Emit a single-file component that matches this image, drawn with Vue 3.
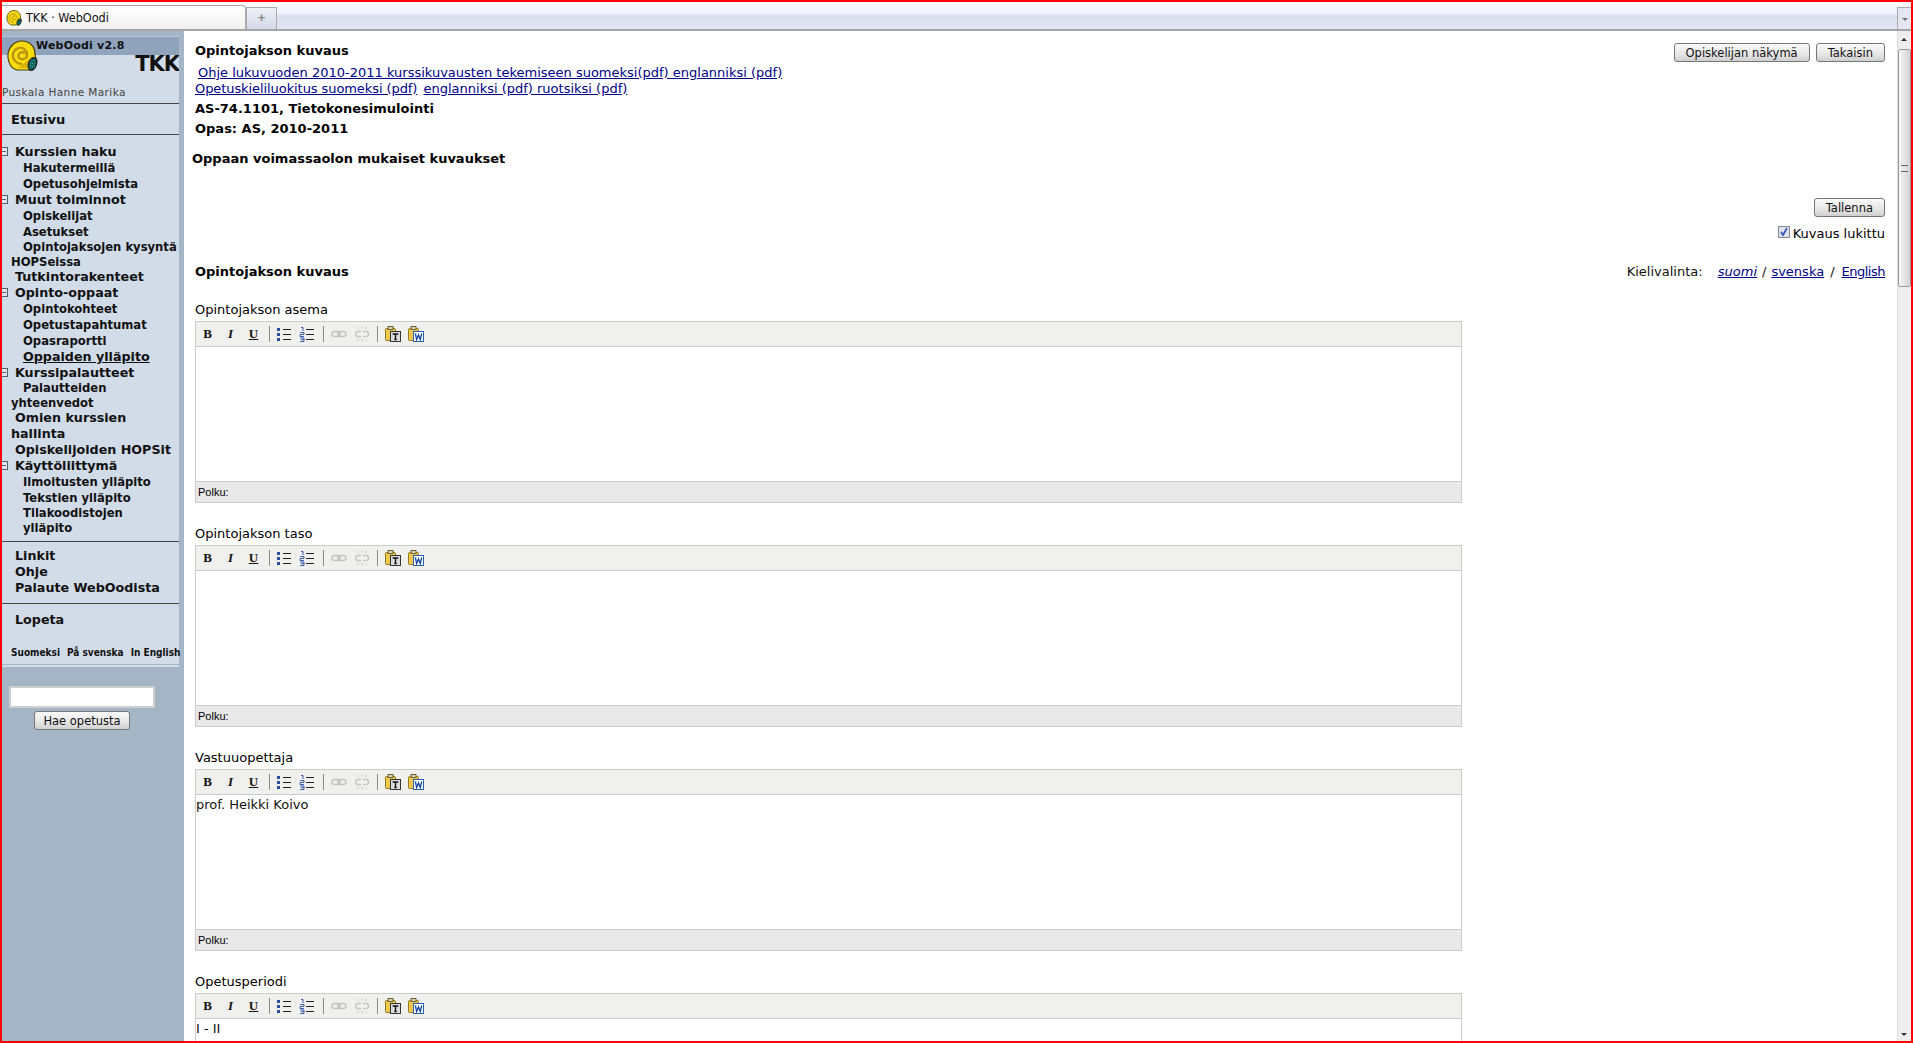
<script setup>
const menu = [
  { t: 'Kurssien haku', k: 'top', box: true, h: 16 },
  { t: 'Hakutermeillä', k: 'sub', h: 16 },
  { t: 'Opetusohjelmista', k: 'sub', h: 16 },
  { t: 'Muut toiminnot', k: 'top', box: true, h: 16 },
  { t: 'Opiskelijat', k: 'sub', h: 16 },
  { t: 'Asetukset', k: 'sub', h: 16 },
  { t: 'Opintojaksojen kysyntä', k: 'sub', h: 15 },
  { t: 'HOPSeissa', k: 'wrap', h: 14 },
  { t: 'Tutkintorakenteet', k: 'top', h: 16 },
  { t: 'Opinto-oppaat', k: 'top', box: true, h: 16 },
  { t: 'Opintokohteet', k: 'sub', h: 16 },
  { t: 'Opetustapahtumat', k: 'sub', h: 16 },
  { t: 'Opasraportti', k: 'sub', h: 16 },
  { t: 'Oppaiden ylläpito', k: 'sub big', h: 16 },
  { t: 'Kurssipalautteet', k: 'top', box: true, h: 16 },
  { t: 'Palautteiden', k: 'sub', h: 15 },
  { t: 'yhteenvedot', k: 'wrap', h: 14 },
  { t: 'Omien kurssien', k: 'top', h: 16 },
  { t: 'hallinta', k: 'wrap big', h: 16 },
  { t: 'Opiskelijoiden HOPSit', k: 'top', h: 16 },
  { t: 'Käyttöliittymä', k: 'top', box: true, h: 16 },
  { t: 'Ilmoitusten ylläpito', k: 'sub', h: 16 },
  { t: 'Tekstien ylläpito', k: 'sub', h: 16 },
  { t: 'Tilakoodistojen', k: 'sub', h: 15 },
  { t: 'ylläpito', k: 'sub', h: 14 }
]

const editors = [
  { label: 'Opintojakson asema', text: '', path: true },
  { label: 'Opintojakson taso', text: '', path: true },
  { label: 'Vastuuopettaja', text: 'prof. Heikki Koivo', path: true },
  { label: 'Opetusperiodi', text: 'I - II', path: false }
]
</script>

<template>
  <div class="screen">
    <div class="tabbar">
      <div class="tab">
        <svg class="favicon" viewBox="0 0 32 32" width="16" height="16">
          <path d="M2 18C1 8 8 1 16 1c8 0 13 6 13 13 0 3 1 5 2 7l-5 9H11C6 29 3 24 2 18z" fill="#f5d90f" stroke="#4a3d08" stroke-width="1.600" />
          <path d="M16 24c-6 0-10-5-9-10s7-8 11-5 4 9 0 10-7-2-5-5 5-2 5 0" fill="none" stroke="#bb9010" stroke-width="2" />
          <ellipse cx="26" cy="24" rx="4" ry="6.500" transform="rotate(18 26 24)" fill="#16605e" stroke="#222" stroke-width="1.400" />
        </svg>
        <span>TKK · WebOodi</span>
      </div>
      <div class="newtab">+</div>
      <div class="tabfill"></div>
      <div class="tabmenu"><i></i></div>
    </div>

    <div class="main">
      <aside class="side">
        <div class="panel">
          <div class="brand">
            <div class="band">WebOodi v2.8</div>
            <svg class="snail" viewBox="0 0 32 32" width="32" height="32">
              <path d="M2 18C1 8 8 1 16 1c8 0 13 6 13 13 0 3 1 5 2 7l-5 9H11C6 29 3 24 2 18z" fill="#f7dc10" stroke="#4a3d08" stroke-width="1.200" />
              <path d="M16 24c-6 0-10-5-9-10s7-8 11-5 4 9 0 10-7-2-5-5 5-2 5 0" fill="none" stroke="#bb9010" stroke-width="2.200" />
              <path d="M12 28l12 0 2-5-4-3z" fill="#d8b30c" />
              <ellipse cx="26.500" cy="24" rx="4" ry="6.500" transform="rotate(18 26.500 24)" fill="#16605e" stroke="#222" stroke-width="1.200" />
              <path d="M25 20l4 1M24 23l6 1M24 26l5 1" stroke="#43b0a8" stroke-width="0.900" stroke-dasharray="1 1" />
            </svg>
            <div class="tkk">TKK</div>
          </div>
          <div class="person">Puskala Hanne Marika</div>
          <hr class="rule rule-top" />
          <div class="home">Etusivu</div>
          <hr class="rule" />
          <div class="tree">
            <div v-for="m in menu" :key="m.t" class="item" :class="m.k" :style="{ height: m.h + 'px', lineHeight: m.h + 'px' }">
              <span v-if="m.box" class="box"></span>{{ m.t }}
            </div>
          </div>
          <hr class="rule rule-a" />
          <div class="top plain">Linkit</div>
          <div class="top plain">Ohje</div>
          <div class="top plain">Palaute WebOodista</div>
          <hr class="rule rule-b" />
          <div class="top plain">Lopeta</div>
          <div class="langs"><span>Suomeksi</span><span>På svenska</span><span>In English</span></div>
        </div>
        <input class="search" type="text" />
        <div class="search-btn"><button class="btn">Hae opetusta</button></div>
      </aside>

      <section class="content">
        <div class="head">
          <div>
            <div class="h1">Opintojakson kuvaus</div>
            <div class="links first"><a>Ohje lukuvuoden 2010-2011 kurssikuvausten tekemiseen suomeksi(pdf) englanniksi (pdf)</a></div>
            <div class="links"><a class="tight">Opetuskieliluokitus suomeksi (pdf)</a> <a class="next">englanniksi (pdf) ruotsiksi (pdf)</a></div>
            <div class="h1 code">AS-74.1101, Tietokonesimulointi</div>
            <div class="h1 code">Opas: AS, 2010-2011</div>
            <div class="h1 valid">Oppaan voimassaolon mukaiset kuvaukset</div>
          </div>
          <div class="head-btns">
            <button class="btn">Opiskelijan näkymä</button>
            <button class="btn">Takaisin</button>
          </div>
        </div>

        <div class="save"><button class="btn">Tallenna</button></div>
        <div class="lock"><span class="check"><svg viewBox="0 0 10 10" width="10" height="10"><path d="M2 5l2 3 4-7" fill="none" stroke="#3b5db5" stroke-width="1.800" /></svg></span>Kuvaus lukittu</div>

        <div class="titlerow">
          <div class="h1">Opintojakson kuvaus</div>
          <div class="lang-pick">Kielivalinta: <a class="cur">suomi</a><span class="slash slash-1">/</span><a>svenska</a><span class="slash">/</span><a class="en">English</a></div>
        </div>

        <div v-for="e in editors" :key="e.label" class="field">
          <div class="label">{{ e.label }}</div>
          <div class="editor">
            <div class="tools">
              <span class="t tb">B</span>
              <span class="t ti">I</span>
              <span class="t tu">U</span>
              <span class="sep"></span>
              <svg class="ic" viewBox="0 0 16 16" width="16" height="16">
                <g fill="#2b4f9e"><rect x="1" y="2" width="3" height="3" /><rect x="1" y="7" width="3" height="3" /><rect x="1" y="12" width="3" height="3" /></g>
                <path d="M7 3.500h8M7 8.500h8M7 13.500h8" stroke="#222" />
              </svg>
              <svg class="ic" viewBox="0 0 16 16" width="16" height="16">
                <path d="M2 1.500h2V5M1 6.500h4v2H1v2h4M1 12h4v3.500H1M2 13.700h3" fill="none" stroke="#2b4f9e" stroke-width="0.900" />
                <path d="M7 3.500h8M7 8.500h8M7 13.500h8" stroke="#222" />
              </svg>
              <span class="sep sep-mid"></span>
              <svg class="ic" viewBox="0 0 16 16" width="16" height="16">
                <g fill="none" stroke="#c4c4c4" stroke-width="1.500"><rect x="1" y="5.500" width="8" height="5" rx="2.500" /><rect x="7" y="5.500" width="8" height="5" rx="2.500" /></g>
              </svg>
              <svg class="ic" viewBox="0 0 16 16" width="16" height="16">
                <g fill="none" stroke="#c4c4c4" stroke-width="1.300"><path d="M7 5.500H4a2.500 2.500 0 0 0 0 5h3M9 5.500h3a2.500 2.500 0 0 1 0 5H9" /><path d="M8 0v3.500M8 12.500V16M3 0.500l2 3M13 0.500l-2 3M3 15.500l2-3M13 15.500l-2-3" stroke-width="0.800" /></g>
              </svg>
              <span class="sep sep-end"></span>
              <svg class="ic" viewBox="0 0 16 16" width="16" height="16">
                <rect x="0.500" y="2.500" width="10" height="12" rx="1" fill="#ecc94a" stroke="#94781c" />
                <rect x="3" y="0.500" width="5" height="3" fill="#d9d2b4" stroke="#6d6330" />
                <rect x="5.500" y="5.500" width="10" height="10" fill="#dcdcdc" stroke="#333" />
                <path d="M7.700 8h5.600M10.500 8v5.500M9.300 13.500h2.400" fill="none" stroke="#111" stroke-width="1.400" />
              </svg>
              <svg class="ic" viewBox="0 0 16 16" width="16" height="16">
                <rect x="0.500" y="2.500" width="10" height="12" rx="1" fill="#ecc94a" stroke="#94781c" />
                <rect x="3" y="0.500" width="5" height="3" fill="#d9d2b4" stroke="#6d6330" />
                <rect x="5.500" y="5.500" width="10" height="10" fill="#fff" stroke="#2b5fb5" />
                <path d="M7.300 7.500l1.400 6 1.800-4.500 1.800 4.500 1.400-6" fill="none" stroke="#1f4fa5" stroke-width="1.400" />
              </svg>
            </div>
            <div class="body">{{ e.text }}</div>
            <div v-if="e.path" class="status">Polku:</div>
          </div>
        </div>
      </section>

      <div class="scroll">
        <div class="arrow up"></div>
        <div class="thumb"><span></span></div>
        <div class="arrow down"></div>
      </div>
    </div>
  </div>
</template>

<style>
html, body { margin: 0; height: 100%; overflow: hidden; background: #fff; }
</style>

<style scoped>
.screen {
  box-sizing: border-box;
  width: 1913px;
  height: 1043px;
  border: 2px solid #f00;
  display: flex;
  flex-direction: column;
  overflow: hidden;
  font-family: "DejaVu Sans", Verdana, sans-serif;
  font-size: 13px;
  color: #000;
  background: #fff;
}

.tabbar {
  height: 29px;
  flex: none;
  display: flex;
  align-items: flex-end;
  box-sizing: border-box;
  border-bottom: 2px solid #a5a5a5;
  background: linear-gradient(#fdfdff, #eef0f9 45%, #d9dff0 50%, #e2e6f3);
}
.tab {
  width: 244px;
  height: 24px;
  box-sizing: border-box;
  display: flex;
  align-items: center;
  gap: 4px;
  padding-left: 4px;
  background: linear-gradient(#fff, #f1f1f1);
  border: 1px solid #aaa;
  border-width: 1px 1px 0 0;
  border-radius: 0 4px 0 0;
  font: 12.5px "DejaVu Sans Condensed", "DejaVu Sans", sans-serif;
  color: #111;
}
.favicon { flex: none; }
.newtab {
  width: 31px;
  height: 22px;
  box-sizing: border-box;
  border: 1px solid #aaa;
  border-bottom: 0;
  background: linear-gradient(#f0f1f7, #d5d9e8);
  text-align: center;
  color: #888;
  font: bold 13px/20px "Liberation Sans", sans-serif;
}
.tabfill { flex: 1; }
.tabmenu {
  width: 14px;
  height: 22px;
  box-sizing: border-box;
  border: 1px solid #aaa;
  border-width: 1px 0 0 1px;
  background: #e4e7f2;
  position: relative;
}
.tabmenu i {
  position: absolute;
  left: 4px;
  top: 10px;
  border: 3px solid transparent;
  border-top-color: #777;
}

.main { flex: 1; display: flex; min-height: 0; }

.side {
  width: 182px;
  flex: none;
  box-sizing: border-box;
  background: #a4b5c5;
  padding-top: 5px;
  font-weight: bold;
}
.panel {
  width: 177px;
  height: 631px;
  background: linear-gradient(#a9b9ca, #a9b9ca) 0 calc(100% - 2px) / 100% 1px no-repeat, #d2dce8;
  color: #111;
}
.brand { position: relative; height: 50px; overflow: hidden; }
.band {
  height: 19px;
  background: #8fa3bd;
  padding-left: 34px;
  font: bold 11px/18px "DejaVu Sans", sans-serif;
  letter-spacing: 0.2px;
  border-top: 1px solid #b9c6d6;
  box-sizing: border-box;
}
.snail { position: absolute; left: 4px; top: 4px; }
.tkk {
  text-align: right;
  font: bold 21px/18px "DejaVu Sans", sans-serif;
  margin-top: 0;
  letter-spacing: -1px;
}
.person {
  height: 12px;
  font: 10.5px/12px "DejaVu Sans", sans-serif;
  color: #444;
  letter-spacing: 0.4px;
  margin-top: 0;
}
.rule {
  height: 0;
  margin: 5px 0 0;
  border: 0;
  border-top: 1px solid #444;
}
.rule-top { margin-top: 5px; }
.home {
  height: 25px;
  line-height: 32px;
  padding-left: 9px;
  font-size: 13px;
}
.tree { padding-top: 9px; }
.item { white-space: nowrap; }
.item.top { padding-left: 13px; font-size: 12.7px; }
.item.sub { padding-left: 21px; font-size: 11.6px; }
.item.wrap { padding-left: 9px; font-size: 11.6px; }
.item.sub.big { font-size: 12.7px; text-decoration: underline; }
.item.wrap.big { font-size: 12.7px; }
.box {
  position: absolute;
  left: 2px;
  width: 6px;
  height: 9px;
  margin-top: 3px;
  box-sizing: border-box;
  border: 1px solid #55606e;
  border-left: 0;
  background: linear-gradient(#55606e, #55606e) 0 3px / 4px 1px no-repeat #dfe5ee;
}
.rule-a { margin-top: 6px; margin-bottom: 6px; }
.rule-b { margin-top: 7px; margin-bottom: 8px; }
.plain { padding-left: 13px; height: 16px; line-height: 16px; font-size: 12.7px; }
.langs {
  display: flex;
  gap: 7px;
  padding-left: 9px;
  margin-top: 17px;
  font: bold 10px/16px "DejaVu Sans Condensed", "DejaVu Sans", sans-serif;
  white-space: nowrap;
}
.search {
  display: block;
  box-sizing: border-box;
  width: 146px;
  height: 22px;
  margin: 19px 0 0 7px;
  border: 2px solid #cfcfcf;
  background: #fff;
}
.search-btn { width: 160px; margin-top: 3px; text-align: center; }
.search-btn .btn { padding: 0 8px; }

.btn {
  box-sizing: border-box;
  height: 19px;
  padding: 0 11px;
  border: 1px solid #777;
  border-radius: 3px;
  background: linear-gradient(#fafafa, #e6e6e6 60%, #cfcfcf);
  font: 11.5px/16px "DejaVu Sans", sans-serif;
  color: #111;
}

.content {
  flex: 1;
  min-width: 0;
  box-sizing: border-box;
  padding: 12px 12px 0 11px;
  overflow: hidden;
}
.head { display: flex; justify-content: space-between; height: 155px; }
.head-btns { display: flex; gap: 6px; }
.h1 { font-weight: bold; font-size: 13px; line-height: 16px; }
.links { font-size: 13px; line-height: 16px; color: #00008b; white-space: nowrap; }
.links a { text-decoration: underline; color: #00008b; }
.links a.tight { letter-spacing: -0.08px; }
.links a.next { margin-left: 2px; }
.first { margin-top: 6px; padding-left: 3px; }
.code { margin-top: 4px; }
.valid { margin: 14px 0 0 -3px; }
.save { text-align: right; margin-top: 0; }
.lock {
  display: flex;
  justify-content: flex-end;
  align-items: center;
  gap: 3px;
  margin-top: 8px;
  height: 16px;
}
.check {
  width: 12px;
  height: 12px;
  box-sizing: border-box;
  border: 1px solid #889;
  background: #dfe3ec;
  display: flex;
  align-items: center;
  justify-content: center;
  margin-top: -2px;
}
.titlerow {
  display: flex;
  justify-content: space-between;
  margin-top: 23px;
  height: 16px;
}
.lang-pick { color: #111; line-height: 16px; }
.lang-pick a { text-decoration: underline; color: #00008b; }
.lang-pick a.cur { font-style: italic; margin-left: 11px; }
.lang-pick a.en { letter-spacing: -0.5px; }
.slash { padding: 0 7px 0 6px; }
.slash-1 { padding: 0 5px; }

.field { height: 224px; }
.label { margin-top: 22px; height: 16px; line-height: 16px; }
.field + .field .label { margin-top: 0; }
.editor {
  width: 1267px;
  box-sizing: border-box;
  border: 1px solid #ccc;
  height: 182px;
  margin-top: 3px;
  display: flex;
  flex-direction: column;
}
.tools {
  height: 25px;
  flex: none;
  box-sizing: border-box;
  border-bottom: 1px solid #ccc;
  background: #f0f0ee;
  display: flex;
  align-items: center;
}
.t {
  width: 23px;
  text-align: center;
  font: bold 13px "Liberation Serif", serif;
  color: #111;
}
.ti { font-style: italic; }
.tu { text-decoration: underline; }
.sep { width: 1px; height: 16px; background: #888; margin: 0 2px 0 4px; flex: none; }
.sep-mid { margin: 0 3px 0 5px; }
.sep-end { margin: 0 3px 0 4px; }
.ic { margin: 0 3px 0 4px; flex: none; }
.body {
  flex: 1;
  padding: 2px 0;
  font-size: 13px;
  line-height: 16px;
  color: #111;
}
.status {
  height: 21px;
  flex: none;
  box-sizing: border-box;
  border-top: 1px solid #ccc;
  background: #e9e9e9;
  padding-left: 2px;
  font: 11px/21px "Liberation Sans", sans-serif;
}

.scroll {
  width: 13px;
  flex: none;
  background: #eee;
  border-left: 1px solid #ddd;
  display: flex;
  flex-direction: column;
}
.arrow { height: 18px; flex: none; position: relative; }
.arrow.up::after {
  content: "";
  position: absolute;
  left: 3px;
  top: 4px;
  border: 3px solid transparent;
  border-bottom-color: #333;
}
.arrow.down { margin-top: auto; }
.arrow.down::after {
  content: "";
  position: absolute;
  left: 3px;
  top: 10px;
  border: 3px solid transparent;
  border-top-color: #333;
}
.thumb {
  height: 238px;
  box-sizing: border-box;
  border: 1px solid #999;
  border-radius: 2px;
  background: linear-gradient(90deg, #f6f6f6, #d2d2d2);
  display: flex;
  align-items: center;
  justify-content: center;
}
.thumb span {
  width: 7px;
  height: 5px;
  border-top: 1px solid #666;
  border-bottom: 1px solid #666;
  position: relative;
}
</style>
